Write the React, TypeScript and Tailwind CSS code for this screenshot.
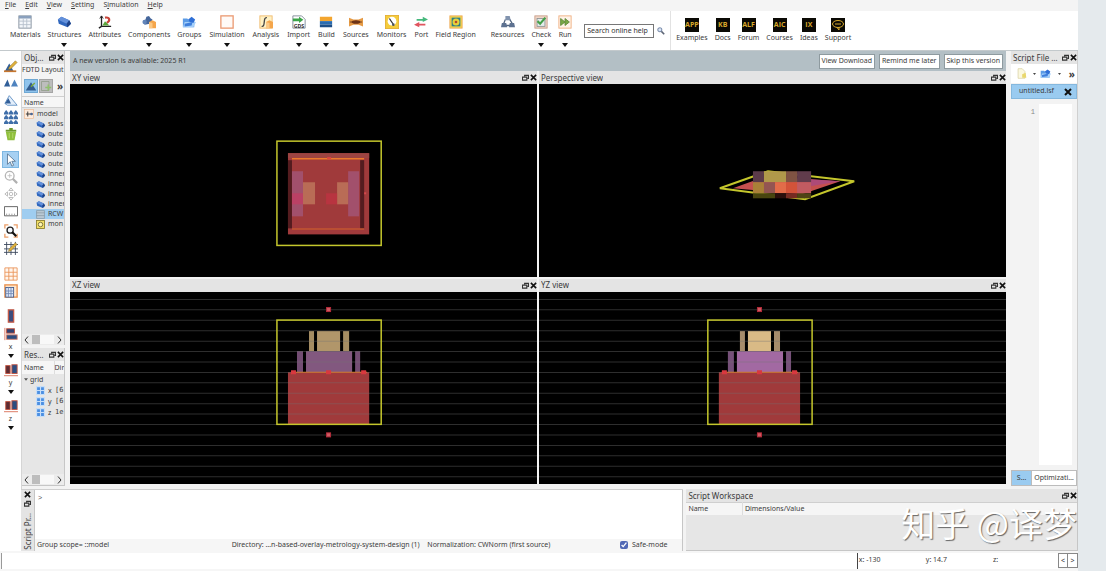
import type { ReactNode } from "react"

/* ---------- icons ---------- */

function Icon({ children, className = "size-[14px]" }: { children: ReactNode; className?: string }) {
  return (
    <svg viewBox="0 0 16 16" className={`${className} shrink-0`} fill="none" aria-hidden="true">
      {children}
    </svg>
  )
}

function Brick() {
  return (
    <>
      <path d="M1 5 L5 2 L14 6 L16 10 L12 14 L2 10 Z" fill="#2f66bd" />
      <path d="M1 5 L5 2 L14 6 L11 10 Z" fill="#6390da" />
      <path d="M11 10 L14 6 L16 10 L12 14 Z" fill="#1f4287" />
    </>
  )
}

function Folder() {
  return (
    <>
      <path d="M1 4 H6 L8 6 H14 V14 H1 Z" fill="#5b9be6" />
      <path d="M3 8 H16 L13 14 H1 Z" fill="#a5d0fa" />
      <path d="M7 5 L11 2 L15 5 L13 9 L9 8 Z" fill="#2f6fd6" />
      <path d="M3 10 L12 8 L11 12 L3 13 Z" fill="#3f7fdc" />
    </>
  )
}

function Field() {
  return (
    <>
      <rect x="1" y="1" width="14" height="14" fill="#f2d64b" stroke="#eda95a" />
      <rect x="3" y="3" width="10" height="10" fill="#2e7f86" />
      <circle cx="8" cy="8" r="4" fill="#e6d13c" />
      <circle cx="8" cy="8" r="1.5" fill="#b5482c" />
    </>
  )
}

const icons: Record<string, ReactNode> = {
  Materials: (
    <>
      <rect x="1" y="1" width="14" height="14" fill="#f3f6fa" stroke="#7f8a99" />
      <path d="M1 1 H15 V4 H1 Z" fill="#8aa0bd" />
      <path d="M1 7 H15 M1 11 H15 M6 4 V15 M10 4 V15" stroke="#b5bfcc" />
    </>
  ),
  Structures: <Brick />,
  Attributes: (
    <>
      <path d="M4 1 V13 H15 M4 13 L1 15" stroke="#222" strokeWidth="1.5" />
      <path d="M2 4 L4 1 L6 4" stroke="#222" />
      <path d="M8 3 C14 2 14 7 10 9" stroke="#c84338" strokeWidth="2.5" />
      <path d="M5 12 L8 7 L13 12 Z" fill="#5ba53b" />
    </>
  ),
  Components: (
    <>
      <path d="M5 2 L8 1 L10 4 L12 5 L9 10 L3 11 L1 7 L4 5 Z" fill="#45669b" />
      <circle cx="3" cy="8" r="2.5" fill="#6285b9" />
      <path d="M8 8 L12 6 L16 8 V15 H8 Z" fill="#f5a64b" />
      <path d="M8 8 L12 9 V15 H8 Z" fill="#fbc884" />
    </>
  ),
  Groups: <Folder />,
  Simulation: <rect x="1" y="1" width="14" height="14" fill="#fffaf7" stroke="#eb9a72" strokeWidth="1.5" />,
  Analysis: (
    <>
      <rect x="1" y="1" width="14" height="14" fill="#fff1c4" stroke="#efb86b" />
      <path d="M3 13 C8 14 4 2 9 3" stroke="#444" strokeWidth="1.5" />
      <path d="M8 8 L12 6 L16 8 V15 H8 Z" fill="#f5a64b" />
      <path d="M8 8 L12 9 V15 H8 Z" fill="#fbc884" />
    </>
  ),
  Import: (
    <>
      <path d="M1 1 H11 L15 5 V15 H1 Z" fill="#fff" stroke="#7c8794" />
      <path d="M1 4 H8 V2 L13 5.5 L8 9 V7 H1 Z" fill="#3ba548" />
      <text x="8" y="14.5" fontSize="6" fontWeight="700" textAnchor="middle" fill="#333">GDS</text>
    </>
  ),
  Build: (
    <>
      <rect x="1" y="2" width="14" height="5" fill="#f3a52f" />
      <rect x="1" y="7" width="14" height="4" fill="#2b6cb0" />
      <rect x="1" y="11" width="14" height="3" fill="#1d4e86" />
    </>
  ),
  Sources: (
    <>
      <path d="M0 3 L5 5 H11 L16 3 V13 L11 11 H5 L0 13 Z" fill="#e59a45" />
      <ellipse cx="8" cy="8" rx="5" ry="2" fill="#6e2f16" />
      <path d="M1 8 H15" stroke="#6b3c1c" />
    </>
  ),
  Monitors: (
    <>
      <rect x="0.5" y="0.5" width="15" height="15" fill="#f5cc3a" stroke="#e3ae32" />
      <circle cx="8" cy="7" r="5" fill="#fff" />
      <path d="M5 4 L9 10" stroke="#333" strokeWidth="1.5" />
      <circle cx="9.5" cy="11" r="1.5" fill="#4a525c" />
    </>
  ),
  Port: (
    <>
      <path d="M3 4.5 H10 V2 L16 5 L10 8 V6.500 H3 Z" fill="#45b87c" />
      <path d="M13 10 H6 V8 L0 11 L6 14 V12 H13 Z" fill="#e0555f" />
    </>
  ),
  "Field Region": <Field />,
  Resources: (
    <>
      <path d="M5 5 L3 10 M10 5 L13 10 M4 12 H12" stroke="#51637e" strokeWidth="1.5" />
      <path d="M5 1 H10 L11 6 H5 Z" fill="#8193ae" />
      <path d="M1 9 H6 L7 14 H0 Z" fill="#5d7190" />
      <path d="M10 9 H15 L16 14 H9 Z" fill="#5d7190" />
    </>
  ),
  Check: (
    <>
      <rect x="1" y="1" width="14" height="14" fill="#f0d6c8" stroke="#c79b85" />
      <rect x="3.5" y="4" width="9" height="9" fill="#e5ecec" stroke="#8c9494" />
      <path d="M4 7 L7 10 L13 3" stroke="#46a049" strokeWidth="2.5" />
    </>
  ),
  Run: (
    <>
      <rect x="1" y="1" width="14" height="14" fill="#fff3e8" stroke="#efad7f" />
      <path d="M3 4 L8 8 L3 12 Z M8 4 L13 8 L8 12 Z" fill="#78a846" stroke="#61893a" />
    </>
  ),
}

function Peaks() {
  return (
    <>
      <path d="M0 12 L4 4 L7 12 Z" fill="#315f99" />
      <path d="M8 12 L12 4 L16 12 Z" fill="#4f83bf" />
    </>
  )
}

function Pencil() {
  return <path d="M6 9 L13 2 L15 4 L8 11 L5 12 Z" fill="#dfb03b" stroke="#7d6520" strokeWidth="0.5" />
}

/* ---------- shared parts ---------- */

function Arrow() {
  return (
    <svg viewBox="0 0 6 4" className="h-[4px] w-[6px] shrink-0" aria-hidden="true">
      <path d="M0 0 H6 L3 4 Z" fill="#111" />
    </svg>
  )
}

function DockButtons({ vertical = false }: { vertical?: boolean }) {
  return (
    <span className={vertical ? "flex flex-col-reverse items-center gap-[2px]" : "flex items-center gap-px"}>
      <button aria-label="Float">
        <svg viewBox="0 0 8 8" className="size-[7px]" fill="none">
          <path d="M3 3 V1.5 H7.5 V5 H6" stroke="#333" strokeWidth="1.3" />
          <path d="M0.5 3.5 H5.5 V7 H0.5 Z" stroke="#333" strokeWidth="1.3" />
        </svg>
      </button>
      <button aria-label="Close">
        <svg viewBox="0 0 8 8" className="size-[7px]" fill="none">
          <path d="M1 1 L7 7 M7 1 L1 7" stroke="#111" strokeWidth="1.8" />
        </svg>
      </button>
    </span>
  )
}

function DockTitle({ title }: { title: string }) {
  return (
    <div className="flex h-[13px] shrink-0 items-center justify-between bg-[#e4e4e4] pl-[2px] text-[8px] text-[#3a3a3a]">
      <h2 className="truncate">{title}</h2>
      <DockButtons />
    </div>
  )
}

function ScrollBar() {
  return (
    <div className="flex h-[11px] shrink-0 items-center justify-between bg-[#ececec] px-[2px]">
      <svg viewBox="0 0 5 8" className="h-[8px] w-[5px]" fill="none">
        <path d="M4 0.5 L1 4 L4 7.5" stroke="#333" />
      </svg>
      <div className="mx-[3px] h-[9px] flex-1 bg-[#f8f8f8]">
        <div className="h-full w-[8px] bg-[#bdbdbd]" />
      </div>
      <svg viewBox="0 0 5 8" className="h-[8px] w-[5px]" fill="none">
        <path d="M1 0.5 L4 4 L1 7.5" stroke="#333" />
      </svg>
    </div>
  )
}

/* ---------- top ---------- */

const menus = [
  ["", "F", "ile"],
  ["", "E", "dit"],
  ["", "V", "iew"],
  ["", "S", "etting"],
  ["S", "i", "mulation"],
  ["", "H", "elp"],
]

const designTools = [
  { label: "Materials", menu: false },
  { label: "Structures", menu: true },
  { label: "Attributes", menu: true },
  { label: "Components", menu: true },
  { label: "Groups", menu: true },
]

const setupTools = [
  { label: "Simulation", menu: true },
  { label: "Analysis", menu: true },
  { label: "Import", menu: true },
  { label: "Build", menu: true },
  { label: "Sources", menu: true },
  { label: "Monitors", menu: true },
  { label: "Port", menu: false },
]

const runTools = [
  { label: "Resources", menu: false },
  { label: "Check", menu: true },
  { label: "Run", menu: true },
]

const links = [
  { label: "Examples", badge: "APP" },
  { label: "Docs", badge: "KB" },
  { label: "Forum", badge: "ALF" },
  { label: "Courses", badge: "AIC" },
  { label: "Ideas", badge: "IX" },
  { label: "Support", badge: "" },
]

function Tool({ label, menu }: { label: string; menu: boolean }) {
  return (
    <button className="flex h-full shrink-0 flex-col items-center pt-[4px]">
      <Icon>{icons[label]}</Icon>
      <span className="leading-[12px]">{label}</span>
      {menu && <span className="mt-[2px] flex"><Arrow /></span>}
    </button>
  )
}

function TopBar() {
  return (
    <header className="shrink-0">
      <nav className="flex h-[11px] items-start gap-[9px] bg-[#f4f4f4] pl-[5px] leading-[9px]">
        {menus.map(([pre, key, rest]) => (
          <button key={key + rest}>
            {pre}
            <span className="underline">{key}</span>
            {rest}
          </button>
        ))}
      </nav>
      <div className="flex h-[40px] border-b border-[#c3c9cc] bg-white">
        <div className="flex gap-[7px] pl-[10px]">
          {designTools.map((t) => (
            <Tool key={t.label} {...t} />
          ))}
        </div>
        <div className="flex gap-[8px] pl-[8px]">
          {setupTools.map((t) => (
            <Tool key={t.label} {...t} />
          ))}
        </div>
        <div className="flex pl-[7px]">
          <Tool label="Field Region" menu={false} />
        </div>
        <div className="flex gap-[7px] pl-[15px]">
          {runTools.map((t) => (
            <Tool key={t.label} {...t} />
          ))}
        </div>
        <div className="flex items-center gap-[3px] pl-[12px]">
          <input
            aria-label="Search online help"
            placeholder="Search online help"
            className="h-[14px] w-[70px] border border-[#777] bg-white px-[2px] placeholder:text-[#333]"
          />
          <svg viewBox="0 0 10 10" className="size-[8px]" fill="none">
            <circle cx="3.5" cy="3.5" r="2.5" fill="#dce6f5" stroke="#7d8fae" strokeWidth="1.3" />
            <path d="M5.5 5.5 L9 9" stroke="#5d6575" strokeWidth="2" />
          </svg>
        </div>
        <div className="ml-[5px] flex gap-[7px] border-l border-[#e2e2e2] pl-[5px]">
          {links.map((l) => (
            <a key={l.label} href="#" className="flex flex-col items-center pt-[7px]">
              <span className="flex size-[14px] items-center justify-center bg-[#0b0a05] font-['Open_Sans',sans-serif] text-[7px] font-bold text-[#d9a92c]">
                {l.badge || (
                  <svg viewBox="0 0 14 14" className="size-[14px]" fill="none">
                    <ellipse cx="7" cy="6" rx="5.5" ry="3.5" stroke="#d9a92c" />
                    <path d="M4 6 H10 M6 9.5 L8 12 V9" stroke="#d9a92c" />
                  </svg>
                )}
              </span>
              <span className="leading-[12px]">{l.label}</span>
            </a>
          ))}
        </div>
      </div>
    </header>
  )
}

/* ---------- left side ---------- */

function SideButton({ label, active = false, children }: { label: string; active?: boolean; children: ReactNode }) {
  return (
    <button
      aria-label={label}
      className={
        active
          ? "flex h-[17px] w-[17px] items-center justify-center border border-[#7db7e2] bg-[#a6d0f2]"
          : "flex h-[17px] w-[17px] items-center justify-center"
      }
    >
      <Icon>{children}</Icon>
    </button>
  )
}

function AlignButton({ axis, children }: { axis: string; children: ReactNode }) {
  return (
    <button className="flex h-[36px] flex-col items-center">
      <Icon>{children}</Icon>
      <span className="leading-[12px]">{axis}</span>
      <span className="mt-px flex"><Arrow /></span>
    </button>
  )
}

function SideTools() {
  return (
    <aside className="flex w-[21px] shrink-0 flex-col items-center bg-white pt-[6px]">
      <SideButton label="Edit object">
        <path d="M1 14 L6 5 L11 14 Z" fill="#315f99" />
        <path d="M0 13 H14 V15 H0 Z" fill="#c6762e" />
        <Pencil />
      </SideButton>
      <SideButton label="Duplicate">
        <Peaks />
      </SideButton>
      <SideButton label="Scale">
        <path d="M1 12 L6 3 L15 14 H4 Z" fill="#e4effb" stroke="#5f8fc4" />
        <path d="M1 12 L5 6 L8 12 Z" fill="#315f99" />
      </SideButton>
      <SideButton label="Array">
        {[0, 5.5, 11].map((y) =>
          [0, 5.5, 11].map((x) => (
            <path key={`${x}-${y}`} d={`M${x} ${y + 5} V${y + 3} L${x + 2.5} ${y} L${x + 5} ${y + 3} V${y + 5} Z`} fill="#3f6ea9" />
          )),
        )}
      </SideButton>
      <SideButton label="Delete">
        <path d="M2 5 H14 L12 15 H4 Z" fill="#8fbf3c" />
        <path d="M2 3 H14 V5 H2 Z M6 1 H10 V3 H6 Z" fill="#6c9a2b" />
        <path d="M6 7 V13 M10 7 V13" stroke="#b8dc70" />
      </SideButton>
      <div className="mt-[9px] flex flex-col">
        <SideButton label="Select" active>
          <path d="M4 1 V13 L7 10 L9 15 L11 14 L9 9.5 H13 Z" fill="#fff" stroke="#5a7793" />
        </SideButton>
        <SideButton label="Zoom">
          <circle cx="6.5" cy="6.5" r="5" stroke="#b5b5b5" strokeWidth="1.5" />
          <path d="M4 6.5 H9 M6.5 4 V9" stroke="#c0c0c0" />
          <path d="M10 10 L15 15" stroke="#b0b0b0" strokeWidth="2.5" />
        </SideButton>
        <SideButton label="Pan">
          <path d="M8 1 L10.5 4 H5.5 Z M8 15 L5.5 12 H10.5 Z M1 8 L4 5.5 V10.5 Z M15 8 L12 10.5 V5.5 Z" stroke="#b5b5b5" />
          <circle cx="8" cy="8" r="2" stroke="#b5b5b5" />
        </SideButton>
        <SideButton label="Ruler">
          <path d="M0.5 3 H15.5 V13.5 H0.5 Z" stroke="#555" />
          <path d="M3 11 V13 M6 11 V13 M9 11 V13 M12 11 V13" stroke="#999" />
        </SideButton>
      </div>
      <div className="mt-[3px] flex flex-col">
        <SideButton label="Zoom extent">
          <path d="M1 5 V1 H5 M11 1 H15 V5 M1 11 V15 H5 M11 15 H15 V11" stroke="#eb9f69" strokeWidth="1.5" />
          <circle cx="7" cy="7" r="3.5" fill="#f5f9ff" stroke="#222" strokeWidth="1.5" />
          <path d="M9.5 9.5 L14 14" stroke="#111" strokeWidth="2.5" />
        </SideButton>
        <SideButton label="Edit mesh">
          <path d="M0 4 H16 M0 9 H16 M0 13 H16 M3 1 V16 M8 1 V16 M13 1 V16" stroke="#39465a" />
          <Pencil />
        </SideButton>
      </div>
      <div className="mt-[9px] flex flex-col">
        <SideButton label="Show mesh">
          <path d="M1 1 H15 V15 H1 Z M1 6 H15 M1 10.5 H15 M5.5 1 V15 M10.5 1 V15" fill="#fff6ee" stroke="#ea9458" />
        </SideButton>
        <SideButton label="Calculator">
          <rect x="1" y="1" width="14" height="14" fill="#ffe5c9" stroke="#e88f4c" strokeWidth="1.5" />
          <rect x="2" y="4" width="9" height="11" fill="#dfe9fa" stroke="#41598a" />
          <path d="M2 8 H11 M2 11 H11 M5 4 V15 M8 4 V15" stroke="#7188b2" />
        </SideButton>
      </div>
      <div className="mt-[8px] flex flex-col items-center">
        <SideButton label="Align">
          <rect x="5" y="1" width="6" height="14" fill="#3c4d7d" stroke="#c25a48" strokeWidth="1.5" />
        </SideButton>
        <div className="mt-[3px]">
          <AlignButton axis="x">
            <path d="M1 1 V15" stroke="#d86b52" />
            <rect x="3" y="2" width="9" height="5" fill="#33406f" stroke="#c2503c" />
            <rect x="3" y="9" width="12" height="5" fill="#2c4d80" stroke="#d37963" />
          </AlignButton>
        </div>
        <AlignButton axis="y">
          <rect x="2" y="3" width="5" height="9" fill="#5d2c33" stroke="#c2503c" />
          <rect x="9" y="2" width="6" height="10" fill="#2c4d80" stroke="#c2503c" />
          <path d="M0 14.5 H16" stroke="#d86b52" />
        </AlignButton>
        <AlignButton axis="z">
          <rect x="2" y="3" width="5" height="9" fill="#5d2c33" stroke="#c2503c" />
          <rect x="9" y="2" width="6" height="10" fill="#2c4d80" stroke="#c2503c" />
          <path d="M0 14.5 H16" stroke="#d86b52" />
        </AlignButton>
      </div>
    </aside>
  )
}

const objects = ["subs", "oute", "oute", "oute", "oute", "inner", "inner", "inner", "inner", "RCW", "mon"]

const results = [
  { name: "x", dim: "[6" },
  { name: "y", dim: "[6" },
  { name: "z", dim: "1e" },
]

function ObjectIcon({ name }: { name: string }) {
  if (name === "RCW") {
    return (
      <Icon className="size-[9px]">
        <path d="M1 1 H15 V15 H1 Z M1 5 H15 M1 10 H15" fill="#b9c9d4" stroke="#7d8b96" />
      </Icon>
    )
  }
  if (name === "mon") {
    return (
      <Icon className="size-[9px]">
        <rect x="1" y="1" width="14" height="14" fill="#f3e067" stroke="#8a7b27" strokeWidth="1.5" />
        <circle cx="8" cy="8" r="4" fill="#fff6b0" stroke="#6b6235" strokeWidth="1.5" />
      </Icon>
    )
  }
  return (
    <Icon className="size-[9px]">
      <Brick />
    </Icon>
  )
}

function ObjectsDock() {
  return (
    <section className="flex min-h-0 flex-1 flex-col border-r border-[#c6c6c6] bg-[#e6e6e6]">
      <DockTitle title="Obj…" />
      <p className="h-[12px] whitespace-nowrap bg-[#f4f4f4] leading-[12px]">FDTD Layout</p>
      <div className="flex h-[20px] shrink-0 items-center gap-px bg-[#f4f4f4] pl-[2px]">
        <button aria-label="Edit" className="border border-[#6fa8d3] bg-[#8fc3ec]">
          <Icon className="size-[12px]">
            <path d="M1 14 L8 3 L15 14 Z" fill="#325c8f" />
            <path d="M8 9 L13 4" stroke="#7da83c" strokeWidth="2" />
          </Icon>
        </button>
        <button aria-label="Add" className="border border-[#a5a5a5] bg-[#bdbdbd]">
          <Icon className="size-[12px]">
            <path d="M2 2 H12 V14 H2 Z" stroke="#8d9a87" />
            <path d="M11 6 V14 M7 10 H15" stroke="#8fc06c" strokeWidth="2" />
          </Icon>
        </button>
        <button className="pl-[3px] text-[10px] font-bold leading-none">»</button>
      </div>
      <div className="h-[12px] shrink-0 border-y border-[#cfcfcf] bg-[#f6f6f6] pl-[2px] leading-[11px]">Name</div>
      <ul className="min-h-0 flex-1 overflow-hidden pt-px leading-[10px]">
        <li className="flex items-center gap-[3px] pl-[2px]">
          <Icon className="size-[10px]">
            <rect x="1" y="1" width="14" height="14" fill="#fdebdc" stroke="#eeb58b" />
            <path d="M3 8 H14 M6 4 V12" stroke="#333" strokeWidth="1.5" />
            <circle cx="12" cy="8" r="2" fill="#45669b" />
          </Icon>
          model
        </li>
        {objects.map((name, i) => (
          <li
            key={i}
            className={
              name === "RCW"
                ? "flex items-center gap-[3px] overflow-hidden bg-[#9fcdf0] pl-[14px]"
                : "flex items-center gap-[3px] overflow-hidden pl-[14px]"
            }
          >
            <ObjectIcon name={name} />
            {name}
          </li>
        ))}
      </ul>
      <ScrollBar />
    </section>
  )
}

function ResultsDock() {
  return (
    <section className="flex h-[138px] shrink-0 flex-col border-b border-r border-[#c6c6c6] bg-[#e6e6e6]">
      <DockTitle title="Res…" />
      <div className="min-h-0 flex-1 overflow-hidden">
        <table className="w-full table-fixed text-left leading-[11px]">
          <thead className="bg-[#f6f6f6]">
            <tr>
              <th className="w-[32px] border-r border-[#ddd] py-px pl-[2px] font-normal">Name</th>
              <th className="font-normal">Dir</th>
            </tr>
          </thead>
          <tbody>
            <tr>
              <td colSpan={2}>
                <span className="flex items-center gap-[2px] pl-[2px]">
                  <svg viewBox="0 0 6 4" className="h-[3px] w-[4px]">
                    <path d="M0 0 H6 L3 4 Z" fill="#555" />
                  </svg>
                  grid
                </span>
              </td>
            </tr>
            {results.map((r) => (
              <tr key={r.name}>
                <td>
                  <span className="flex items-center gap-[3px] pl-[14px]">
                    <Icon className="size-[9px]">
                      <rect width="16" height="16" fill="#c6def8" />
                      <path d="M2 2 H7 V7 H2 Z M9 2 H14 V7 H9 Z M2 9 H7 V14 H2 Z M9 9 H14 V14 H9 Z" fill="#4b8fe2" />
                    </Icon>
                    {r.name}
                  </span>
                </td>
                <td className="pl-px font-['DejaVu_Sans_Mono',monospace]">{r.dim}</td>
              </tr>
            ))}
          </tbody>
        </table>
      </div>
      <ScrollBar />
    </section>
  )
}

/* ---------- views ---------- */

function View({ title, children }: { title: string; children: ReactNode }) {
  return (
    <section className="flex min-h-0 min-w-0 flex-col">
      <DockTitle title={title} />
      <svg
        viewBox="0 0 467 192"
        preserveAspectRatio="xMidYMid slice"
        className="min-h-0 w-full flex-1 bg-black"
        role="img"
        aria-label={title}
      >
        {children}
      </svg>
    </section>
  )
}

function TopScene() {
  return (
    <>
      <rect x="207" y="57" width="104" height="104" fill="none" stroke="#c4c62c" strokeWidth="1.5" />
      <rect x="218" y="69" width="81" height="81" fill="#a03a3b" />
      <rect x="218" y="69" width="81" height="5" fill="#9c4442" />
      <rect x="218" y="76" width="4" height="68" fill="#541c1f" />
      <rect x="290" y="76" width="4" height="68" fill="#541c1f" />
      <rect x="222" y="87" width="11" height="45" fill="#a2506c" />
      <rect x="278" y="87" width="11" height="45" fill="#a2506c" />
      <rect x="222" y="109" width="11" height="11" fill="#bb4165" />
      <rect x="233" y="98" width="12" height="22" fill="#b96c56" />
      <rect x="267" y="98" width="11" height="22" fill="#b96c56" />
      <rect x="256" y="109" width="11" height="11" fill="#b83440" />
      <path d="M222 74.5 H294" stroke="#ec7a2b" strokeWidth="1.5" />
      <path d="M222 144.5 H294" stroke="#d3622d" />
      <rect x="257" y="73" width="4" height="2" fill="#e0443f" />
      <rect x="294" y="108" width="2" height="2" fill="#d3484c" />
    </>
  )
}

const mosaic = [
  [214, 87, 11, 11, "#5b3a49"],
  [225, 87, 22, 11, "#b0994a"],
  [247, 87, 11, 11, "#7f5343"],
  [258, 87, 14, 11, "#613c4c"],
  [214, 98, 11, 11, "#aa8038"],
  [225, 98, 11, 11, "#935552"],
  [236, 98, 11, 11, "#e26c49"],
  [247, 98, 11, 11, "#d35339"],
  [258, 98, 14, 11, "#c15b61"],
  [214, 109, 22, 5, "#49450f"],
  [236, 109, 11, 5, "#2a0f0c"],
  [247, 109, 11, 5, "#762b22"],
  [258, 109, 14, 5, "#4f4315"],
] as const

function PerspectiveScene() {
  return (
    <>
      <path d="M181 104 L229 87 L315 97 L266 115 Z" fill="none" stroke="#c4c62c" strokeWidth="2" />
      <path d="M194 104 L227 92 L301 97 L263 110 Z" fill="#c5504f" />
      <path d="M271 95 L301 97 L271 102 Z" fill="#ad4a78" />
      {mosaic.map(([x, y, w, h, fill]) => (
        <rect key={`${x}-${y}`} x={x} y={y} width={w} height={h} fill={fill} />
      ))}
    </>
  )
}

function Marker({ x, y }: { x: number; y: number }) {
  return <rect x={x - 2} y={y - 2} width="4" height="4" fill="#d05a62" stroke="#b32c3a" />
}

type SideSceneProps = { shift?: number; tan: string; tanEdge: string; purple: string; purpleEdge: string }

function SideScene({ shift = 0, tan, tanEdge, purple, purpleEdge }: SideSceneProps) {
  const lines = Array.from({ length: 18 }, (_, i) => 7.4 + i * 10.4)
  return (
    <>
      <g transform={`translate(${shift} 0)`}>
        <rect x="239" y="39" width="5" height="20" fill={tanEdge} />
        <rect x="247" y="39" width="23" height="20" fill={tan} />
        <rect x="273" y="39" width="6" height="20" fill={tanEdge} />
        <rect x="227" y="59" width="6" height="21" fill={purpleEdge} />
        <rect x="236" y="59" width="46" height="21" fill={purple} />
        <rect x="285" y="59" width="5" height="21" fill={purpleEdge} />
        <rect x="218" y="80" width="81" height="52" fill="#a03a3b" />
      </g>
      {lines.map((y) => (
        <path key={y} d={`M0 ${y} H467`} stroke="#747474" strokeOpacity="0.4" />
      ))}
      <g transform={`translate(${shift} 0)`}>
        <path d="M221 80 H297" stroke="#d9792f" />
        <rect x="207" y="28" width="104" height="104" fill="none" stroke="#c4c62c" strokeWidth="1.5" />
        <Marker x={258.5} y={17.5} />
        <Marker x={258.5} y={142.5} />
        <path d="M221 78 H226 V82 H221 Z M256 78 H261 V82 H256 Z M291 78 H296 V82 H291 Z" fill="#d8383f" />
      </g>
    </>
  )
}

/* ---------- right side and bottom ---------- */

function ScriptFileDock() {
  return (
    <section className="flex w-[67px] shrink-0 flex-col border-r border-[#d0d0d0] bg-[#f3f3f3]">
      <DockTitle title="Script File …" />
      <div className="flex h-[19px] shrink-0 items-center bg-white pl-[5px]">
        <button aria-label="New script" className="flex items-center gap-[6px]">
          <Icon className="size-[11px]">
            <path d="M3 1 H9 L13 5 V15 H3 Z" fill="#fbf8df" stroke="#d6cd9e" />
            <path d="M9 9 L14 7 L15 14 H9 Z" fill="#e9d76c" />
          </Icon>
          <svg viewBox="0 0 6 4" className="h-[2px] w-[3px]"><path d="M0 0 H6 L3 4 Z" fill="#444" /></svg>
        </button>
        <button aria-label="Open script" className="ml-[4px] flex items-center gap-[7px]">
          <Icon className="size-[11px]">
            <Folder />
          </Icon>
          <svg viewBox="0 0 6 4" className="h-[2px] w-[3px]"><path d="M0 0 H6 L3 4 Z" fill="#444" /></svg>
        </button>
        <button className="ml-auto pr-[2px] text-[10px] font-bold leading-none">»</button>
      </div>
      <div className="mt-px flex h-[15px] shrink-0 items-center justify-between border border-[#85b8de] bg-[#9acbf0] pl-[7px] pr-[4px]">
        <span>untitled.lsf</span>
        <button aria-label="Close untitled.lsf">
          <svg viewBox="0 0 8 8" className="size-[8px]" fill="none">
            <path d="M1 1 L7 7 M7 1 L1 7" stroke="#111" strokeWidth="2" />
          </svg>
        </button>
      </div>
      <div className="mt-[5px] flex min-h-0 flex-1">
        <span className="w-[28px] shrink-0 pr-[4px] pt-[3px] text-right font-['Liberation_Mono',monospace] text-[#888]">1</span>
        <textarea aria-label="Script" className="min-w-0 flex-1 resize-none bg-white" />
        <div className="w-[5px]" />
      </div>
      <div className="mb-[3px] mt-[5px] flex h-[16px] shrink-0 border border-[#bcbcbc] bg-white">
        <button className="w-[19px] shrink-0 bg-[#9acbf0]">S…</button>
        <button className="min-w-0 flex-1 whitespace-nowrap border-l border-[#bcbcbc]">Optimizati…</button>
      </div>
    </section>
  )
}

function ScriptPrompt() {
  return (
    <section className="flex min-w-0 flex-[663] border-t border-[#cfcfcf]">
      <div className="flex w-[13px] shrink-0 flex-col items-center justify-between bg-[#e4e4e4] py-px text-[8px] leading-[12px]">
        <DockButtons vertical />
        <h2 className="rotate-180 whitespace-nowrap [writing-mode:vertical-rl]">Script Pr…</h2>
      </div>
      <div className="flex min-w-0 flex-1 flex-col border-x border-[#c6c6c6]">
        <textarea
          aria-label="Script prompt"
          defaultValue=">"
          className="min-h-0 flex-1 resize-none bg-white px-[3px] pt-[3px] font-['Liberation_Mono',monospace] leading-[10px] text-[#555]"
        />
        <div className="flex h-[12px] shrink-0 items-center whitespace-nowrap bg-[#f6f6f6] pl-[2px] pr-[15px]">
          <span className="flex-[195]">Group scope= ::model</span>
          <span className="flex-[196]">Directory: …n-based-overlay-metrology-system-design (1)</span>
          <span className="flex-[193]">Normalization: CWNorm (first source)</span>
          <label className="flex items-center gap-[4px]">
            <input type="checkbox" defaultChecked className="size-[8px] accent-[#5269b5]" />
            Safe-mode
          </label>
        </div>
      </div>
    </section>
  )
}

function ScriptWorkspace() {
  return (
    <section className="relative flex min-w-0 flex-[391] flex-col border-b border-r border-[#c6c6c6] bg-[#e6e6e6]">
      <DockTitle title="Script Workspace" />
      <table className="w-full table-fixed border-t border-[#cfcfcf] text-left leading-[12px]">
        <thead className="bg-[#f5f5f5]">
          <tr>
            <th className="w-[56px] border-r border-[#ddd] pl-[2px] font-normal">Name</th>
            <th className="pl-[2px] font-normal">Dimensions/Value</th>
          </tr>
        </thead>
      </table>
      <div className="absolute bottom-[8px] right-0 whitespace-nowrap font-['Noto_Sans_CJK_SC',sans-serif] text-[34px] leading-[38px] text-white [text-shadow:1px_1px_1px_#666]">
        知乎 @译梦
      </div>
    </section>
  )
}

function StatusBar() {
  return (
    <footer className="flex h-[20px] shrink-0 items-center bg-[#f6f6f6] pb-px">
      <div className="ml-px flex h-[16px] flex-1 items-center border-l border-[#999] bg-white">
        <div className="flex-[858]" />
        <div className="flex h-full flex-[200] items-center border-l border-[#444] pl-px">
          <span className="flex-[67]">x: -130</span>
          <span className="flex-[67]">y: 14.7</span>
          <span className="flex-[65]">z:</span>
        </div>
      </div>
      <button className="h-[15px] w-[10px] border border-[#888] bg-white leading-none">&lt;</button>
      <button className="h-[15px] w-[10px] border border-l-0 border-[#888] bg-white leading-none">&gt;</button>
    </footer>
  )
}

export default function App() {
  return (
    <div className="flex h-screen overflow-hidden bg-[#e5eaed] pr-[28px] font-['Noto_Sans',sans-serif] text-[7px] text-[#3c3c3c]">
      <div className="flex min-w-0 flex-1 flex-col bg-[#f3f3f3]">
        <TopBar />
        <div className="flex min-h-0 flex-1">
          <SideTools />
          <div className="flex min-w-0 flex-1 flex-col">
            <div className="flex min-h-0 flex-1 gap-[5px]">
              <div className="flex w-[44px] shrink-0 flex-col gap-[3px] border-l border-[#d5d5d5] pb-[3px]">
                <ObjectsDock />
                <ResultsDock />
              </div>
              <main className="flex min-w-0 flex-1 flex-col pb-[5px]">
                <div className="flex h-[20px] shrink-0 items-center gap-[4px] bg-[#b3bfc5] px-[3px]">
                  <span className="flex-1">A new version is available: 2025 R1</span>
                  <button className="h-[15px] border border-[#8e9a9f] bg-white px-[2px]">View Download</button>
                  <button className="h-[15px] border border-[#8e9a9f] bg-white px-[2px]">Remind me later</button>
                  <button className="h-[15px] border border-[#8e9a9f] bg-white px-[2px]">Skip this version</button>
                </div>
                <div className="grid min-h-0 flex-1 grid-cols-2 grid-rows-2 gap-[2px]">
                  <View title="XY view">
                    <TopScene />
                  </View>
                  <View title="Perspective view">
                    <PerspectiveScene />
                  </View>
                  <View title="XZ view">
                    <SideScene tan="#b1966a" tanEdge="#a58d63" purple="#82587f" purpleEdge="#734d73" />
                  </View>
                  <View title="YZ view">
                    <SideScene shift={-38} tan="#d9ba86" tanEdge="#a68c6b" purple="#a269a2" purpleEdge="#765079" />
                  </View>
                </div>
              </main>
              <ScriptFileDock />
            </div>
            <div className="flex h-[62px] shrink-0 gap-[3px]">
              <ScriptPrompt />
              <ScriptWorkspace />
            </div>
          </div>
        </div>
        <StatusBar />
      </div>
    </div>
  )
}
